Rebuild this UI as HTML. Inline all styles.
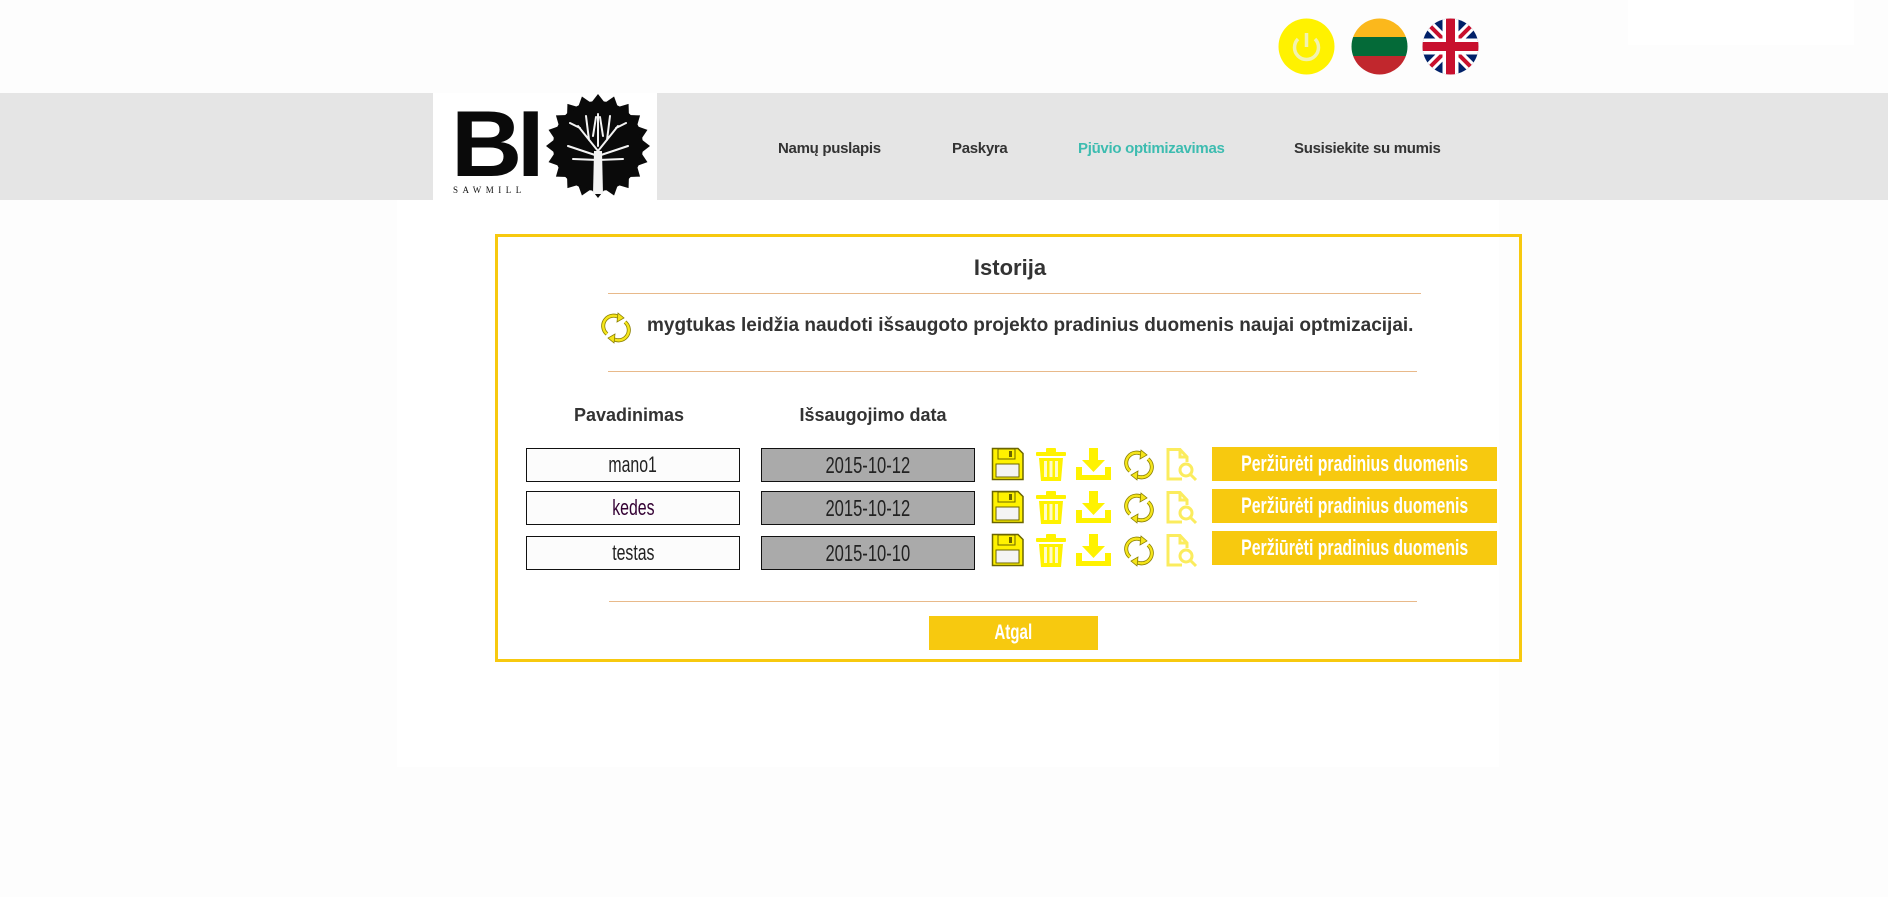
<!DOCTYPE html>
<html><head><meta charset="utf-8"><style>
*{margin:0;padding:0;box-sizing:border-box}
body{width:1888px;height:897px;background:#fdfdfd;font-family:"Liberation Sans",sans-serif;position:relative;overflow:hidden}
.abs{position:absolute}
.nav{position:absolute;top:93px;left:0;width:1888px;height:107px;background:#e5e5e5}
.nav a{position:absolute;top:47px;font-size:15px;font-weight:bold;color:#333;letter-spacing:-0.3px}
.panel{position:absolute;left:397px;top:200px;width:1102px;height:567px;background:#fff}
.box{position:absolute;left:495px;top:234px;width:1027px;height:428px;border:3px solid #f7c90f}
.hr{position:absolute;height:1px;background:#e8b98a}
.cond{display:inline-block;transform:scaleX(0.72);transform-origin:center;white-space:nowrap;flex:none}
.name,.date,.btn,.atg{display:flex;justify-content:center;align-items:center}
.name{position:absolute;left:526px;width:214px;height:34px;border:1px solid #111;background:#fcfcfc;font-size:22px;color:#222}
.date{position:absolute;left:761px;width:214px;height:34px;border:1px solid #111;background:#aaa;font-size:23px;color:#222}
.btn{position:absolute;left:1212px;width:285px;height:34px;background:#f7c90f;color:#fff;font-size:22px;font-weight:bold}
.ic{position:absolute}
</style></head><body>
<div class="abs" style="left:1628px;top:0;width:226px;height:45px;background:#fff"></div>
<svg class="abs" style="left:1278px;top:18px" width="57" height="57" viewBox="0 0 57 57"><circle cx="28.5" cy="28.5" r="28" fill="#fff200"/><path d="M20 21a12 12 0 1 0 17 0" fill="none" stroke="#f2f2b0" stroke-width="3.5"/><line x1="28.5" y1="15" x2="28.5" y2="29" stroke="#f2f2b0" stroke-width="3.5"/></svg>
<svg class="abs" style="left:1351px;top:18px" width="57" height="57" viewBox="0 0 57 57"><defs><clipPath id="c1"><circle cx="28.5" cy="28.5" r="28"/></clipPath></defs><g clip-path="url(#c1)"><rect width="57" height="19" fill="#fbb81c"/><rect y="19" width="57" height="19" fill="#046a38"/><rect y="38" width="57" height="19" fill="#c1272d"/></g></svg>
<svg class="abs" style="left:1422px;top:18px" width="57" height="57" viewBox="0 0 57 57"><defs><clipPath id="c2"><circle cx="28.5" cy="28.5" r="28"/></clipPath></defs><g clip-path="url(#c2)"><rect width="57" height="57" fill="#012169"/><path d="M0 0L57 57M57 0L0 57" stroke="#fff" stroke-width="10"/><path d="M0 0L57 57M57 0L0 57" stroke="#c8102e" stroke-width="4"/><path d="M28.5 0V57M0 28.5H57" stroke="#fff" stroke-width="16"/><path d="M28.5 0V57M0 28.5H57" stroke="#c8102e" stroke-width="9"/></g></svg>

<div class="nav">
 <a style="left:778px">Namų puslapis</a>
 <a style="left:952px">Paskyra</a>
 <a style="left:1078px;color:#3dbcb0">Pjūvio optimizavimas</a>
 <a style="left:1294px">Susisiekite su mumis</a>
</div>
<div class="abs" style="left:433px;top:93px;width:224px;height:107px;background:#fff;overflow:hidden">
 <div class="abs" style="left:18px;top:4px;font-size:94px;font-weight:bold;color:#0a0a0a;letter-spacing:-5px;line-height:94px;transform:scaleX(1.05);transform-origin:left">BI</div>
 <div class="abs" style="left:20px;top:92px;font-size:9px;letter-spacing:4.5px;color:#111;font-family:'Liberation Serif',serif">SAWMILL</div>
 <svg class="abs" style="left:112px;top:0px" width="106" height="106" viewBox="-53 -53 106 106"><circle r="45" fill="#0a0a0a"/><g fill="#0a0a0a"><path d="M0-52L7-43L-7-43Z"/><path d="M0-52L7-43L-7-43Z" transform="rotate(18)"/><path d="M0-52L7-43L-7-43Z" transform="rotate(36)"/><path d="M0-52L7-43L-7-43Z" transform="rotate(54)"/><path d="M0-52L7-43L-7-43Z" transform="rotate(72)"/><path d="M0-52L7-43L-7-43Z" transform="rotate(90)"/><path d="M0-52L7-43L-7-43Z" transform="rotate(108)"/><path d="M0-52L7-43L-7-43Z" transform="rotate(126)"/><path d="M0-52L7-43L-7-43Z" transform="rotate(144)"/><path d="M0-52L7-43L-7-43Z" transform="rotate(162)"/><path d="M0-52L7-43L-7-43Z" transform="rotate(180)"/><path d="M0-52L7-43L-7-43Z" transform="rotate(198)"/><path d="M0-52L7-43L-7-43Z" transform="rotate(216)"/><path d="M0-52L7-43L-7-43Z" transform="rotate(234)"/><path d="M0-52L7-43L-7-43Z" transform="rotate(252)"/><path d="M0-52L7-43L-7-43Z" transform="rotate(270)"/><path d="M0-52L7-43L-7-43Z" transform="rotate(288)"/><path d="M0-52L7-43L-7-43Z" transform="rotate(306)"/><path d="M0-52L7-43L-7-43Z" transform="rotate(324)"/><path d="M0-52L7-43L-7-43Z" transform="rotate(342)"/></g><g stroke="#f4f4f4" fill="none" stroke-width="2" stroke-linecap="round"><path d="M0 5L-20-20M0 5L20-20M0 10L-30 0M0 10L30 0M0 14L-25 13M0 14L25 13M-9-6L-12-30M9-6L12-30M0 0L0-32M-18-18L-28-23M18-18L28-23M-5-10L-2-29M5-10L2-29"/></g><path d="M-5 48L-4 5H4L5 48Z" fill="#f4f4f4"/></svg>
</div>

<div class="panel"></div>
<div class="box"></div>
<div class="abs" style="left:0;width:2020px;top:255px;text-align:center;font-size:22px;font-weight:bold;color:#333">Istorija</div>
<div class="hr" style="left:608px;top:293px;width:813px"></div>
<svg class="ic" style="left:601px;top:312px" width="30" height="32" viewBox="0 0 30 32"><g fill="none" stroke="#8a7f00" stroke-width="4"><path d="M6 22A10 10 0 0 1 19 6"/><path d="M24 10A10 10 0 0 1 11 26"/></g><g fill="none" stroke="#f5e51b" stroke-width="2.4"><path d="M6 22A10 10 0 0 1 19 6"/><path d="M24 10A10 10 0 0 1 11 26"/></g><path d="M17 1L23 6L16 10Z M13 31L7 26L14 22Z" fill="#f5e51b" stroke="#8a7f00" stroke-width="0.8"/></svg>
<div class="abs" style="left:647px;top:315px;font-size:19px;font-weight:bold;color:#333;white-space:nowrap">mygtukas leidžia naudoti išsaugoto projekto pradinius duomenis naujai optmizacijai.</div>
<div class="hr" style="left:608px;top:371px;width:809px"></div>

<div class="abs" style="left:529px;width:200px;top:405px;text-align:center;font-size:18px;font-weight:bold;color:#333">Pavadinimas</div>
<div class="abs" style="left:773px;width:200px;top:405px;text-align:center;font-size:18px;font-weight:bold;color:#333">Išsaugojimo data</div>

<div class="name" style="top:448px"><span class="cond">mano1</span></div>
<div class="date" style="top:448px"><span class="cond">2015-10-12</span></div>
<div class="name" style="top:491px"><span class="cond" style="color:#303">kedes</span></div>
<div class="date" style="top:491px"><span class="cond">2015-10-12</span></div>
<div class="name" style="top:536px"><span class="cond">testas</span></div>
<div class="date" style="top:536px"><span class="cond">2015-10-10</span></div>

<div class="btn" style="top:447px"><span class="cond">Peržiūrėti pradinius duomenis</span></div>
<div class="btn" style="top:489px"><span class="cond">Peržiūrėti pradinius duomenis</span></div>
<div class="btn" style="top:531px"><span class="cond">Peržiūrėti pradinius duomenis</span></div>

<svg width="0" height="0" style="position:absolute"><defs>
<g id="row">
 <g><path d="M1.5 1.5H27L32 6.5V32.5H1.5Z" fill="#fff200" stroke="#6b6500" stroke-width="1.5"/><rect x="5" y="17" width="23" height="13" fill="#f4f4f4" stroke="#6b6500"/><rect x="7" y="2" width="17" height="10" fill="#fff200" stroke="#6b6500"/><rect x="18" y="4" width="3" height="6" fill="#6b6500"/></g>
 <g transform="translate(45,0)" fill="#fff200"><rect x="0" y="5" width="30" height="4" rx="1"/><rect x="10" y="1" width="10" height="5" rx="1"/><path d="M3 11H27L25 34H5Z"/><g fill="#fffbc8"><rect x="8" y="14" width="3" height="16"/><rect x="13.5" y="14" width="3" height="16"/><rect x="19" y="14" width="3" height="16"/></g></g>
 <g transform="translate(85,0)" fill="#fff200"><rect x="13" y="1" width="9" height="14"/><path d="M6 13H29L17.5 25Z"/><path d="M0 20H6V28H29V20H35V33H0Z"/></g>
 <g transform="translate(133,2)"><g fill="none" stroke="#8a7f00" stroke-width="4"><path d="M6 22A10 10 0 0 1 19 6"/><path d="M24 10A10 10 0 0 1 11 26"/></g><g fill="none" stroke="#f5e51b" stroke-width="2.4"><path d="M6 22A10 10 0 0 1 19 6"/><path d="M24 10A10 10 0 0 1 11 26"/></g><path d="M17 1L23 6L16 10Z M13 31L7 26L14 22Z" fill="#f5e51b" stroke="#8a7f00" stroke-width="0.8"/></g>
 <g transform="translate(175,1)" fill="none" stroke="#fbec5e" stroke-width="3"><path d="M16 31H2V1.5H14L21 9V14"/><path d="M14 1.5V9H21"/><circle cx="20" cy="22" r="6"/><path d="M24.5 26.5L30 32"/></g>
</g></defs></svg>
<svg class="ic" style="left:991px;top:447px" width="210" height="36"><use href="#row"/></svg>
<svg class="ic" style="left:991px;top:490px" width="210" height="36"><use href="#row"/></svg>
<svg class="ic" style="left:991px;top:533px" width="210" height="36"><use href="#row"/></svg>

<div class="hr" style="left:609px;top:601px;width:808px"></div>
<div class="abs atg" style="left:929px;top:616px;width:169px;height:34px;background:#f7c90f;color:#fff;font-size:21px;font-weight:bold"><span class="cond">Atgal</span></div>
</body></html>
